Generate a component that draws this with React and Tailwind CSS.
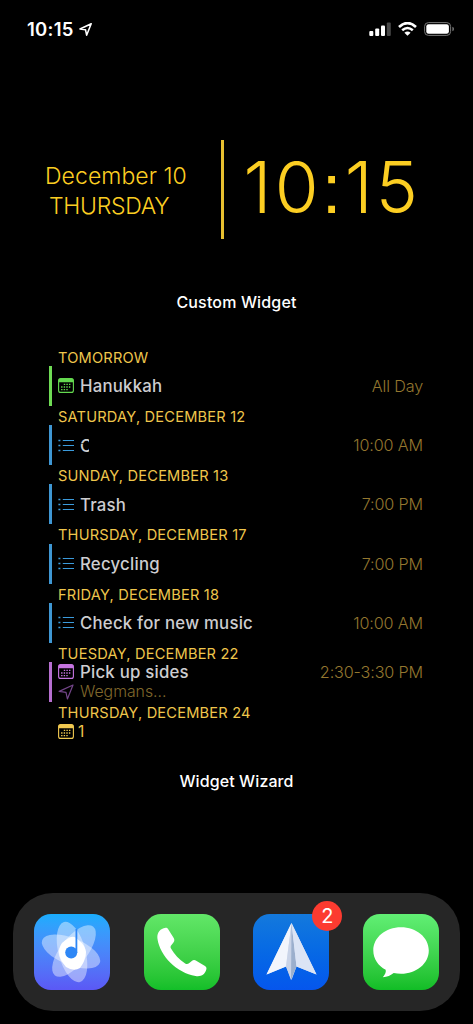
const days = [
  { heading: "TOMORROW", title: "Hanukkah", time: "All Day", kind: "event", color: "text-[#64d94f]", bar: "bg-[#6fdb55]" },
  { heading: "SATURDAY, DECEMBER 12", title: "C", time: "10:00 AM", kind: "task", redacted: true },
  { heading: "SUNDAY, DECEMBER 13", title: "Trash", time: "7:00 PM", kind: "task" },
  { heading: "THURSDAY, DECEMBER 17", title: "Recycling", time: "7:00 PM", kind: "task" },
  { heading: "FRIDAY, DECEMBER 18", title: "Check for new music", time: "10:00 AM", kind: "task" },
  {
    heading: "TUESDAY, DECEMBER 22",
    title: "Pick up sides",
    time: "2:30-3:30 PM",
    kind: "event",
    location: "Wegmans...",
    color: "text-[#c574e0]",
    bar: "bg-[#b66fd0]",
  },
];

const CalendarIcon = ({ className }) => (
  <svg viewBox="0 0 16 15" className={`w-4 h-[15px] shrink-0 ${className}`} fill="none">
    <rect x="0.6" y="0.6" width="14.8" height="13.8" rx="2" stroke="currentColor" strokeWidth="1.1" />
    <path d="M0.6 4.2V2.4Q0.6 0.6 2.4 0.6H13.6Q15.4 0.6 15.4 2.4V4.2Z" fill="currentColor" />
    <path
      d="M5.8 6.4H13.2M3.1 9H13.2M3.1 11.6H10.6"
      stroke="currentColor"
      strokeWidth="1.3"
      strokeDasharray="1.4 1.2"
    />
  </svg>
);

const ListIcon = ({ className }) => (
  <svg viewBox="0 0 16 13" className={`w-4 h-[13px] shrink-0 ${className}`} fill="none" stroke="currentColor">
    <path d="M4.8 1.5H16M4.8 6.5H16M4.8 11.5H16" strokeWidth="1.1" />
    <path d="M0.4 1.5H2.4M0.4 6.5H2.4M0.4 11.5H2.4" strokeWidth="1.7" />
  </svg>
);

const LocationIcon = ({ className }) => (
  <svg viewBox="0 0 16 16" className={`shrink-0 ${className}`} fill="none" stroke="currentColor" strokeLinejoin="round">
    <path d="M15 1L1.2 7.4L8 8.3L9.4 15Z" />
  </svg>
);

const StatusBar = () => (
  <div className="h-[58px] pl-[27px] pr-[18px] flex items-center justify-between text-white">
    <div className="flex items-center gap-[5px]">
      <span className="text-[18.5px] font-semibold tracking-[0.25px] leading-none">10:15</span>
      <LocationIcon className="w-[13px] h-[13px] stroke-[1.9]" />
    </div>
    <div className="flex items-center gap-[7px]">
      <svg viewBox="0 0 22 14" className="w-[22px] h-[14px]" fill="currentColor">
        <rect x="0.3" y="9" width="4" height="5" rx="1" />
        <rect x="6.2" y="6.6" width="4" height="7.4" rx="1" />
        <rect x="12" y="3.6" width="4" height="10.4" rx="1" />
        <rect x="17.8" y="0.4" width="4" height="13.6" rx="1" opacity="0.28" />
      </svg>
      <svg viewBox="0 0 19 14" className="w-[19px] h-[14px]" fill="none" stroke="currentColor">
        <path d="M1 4.9Q9.5 -2.7 18 4.9" strokeWidth="2.7" />
        <path d="M4.2 8.3Q9.5 3.6 14.8 8.3" strokeWidth="2.5" />
        <path d="M9.5 13.8L6.4 10.8Q9.5 8.4 12.6 10.8Z" fill="currentColor" stroke="none" />
      </svg>
      <svg viewBox="0 0 31 14" className="w-[31px] h-[14px]" fill="none">
        <rect x="0.6" y="0.6" width="26" height="12.8" rx="3.8" stroke="#777" strokeWidth="1" />
        <rect x="2.3" y="2.2" width="22.6" height="9.6" rx="2.3" fill="white" />
        <path d="M28.4 4.8Q30 5.3 30 7T28.4 9.2Z" fill="#777" />
      </svg>
    </div>
  </div>
);

const ClockWidget = () => (
  <div className="mt-[82px] h-[99px] pl-[45px] flex items-center text-[#fcce22] font-light">
    <div className="w-[176px] text-[23px] leading-[30px] pt-0.5">
      <div className="tracking-[0.05px] whitespace-nowrap">December 10</div>
      <div className="pl-1 tracking-[-0.3px]">THURSDAY</div>
    </div>
    <div className="w-[2.5px] h-[99px] bg-[#e8c030]" />
    <div className="ml-5 pb-1 text-[71px] leading-none tracking-[3.2px] whitespace-nowrap">
      10<span className="font-['Liberation_Sans',sans-serif]">:</span>15
    </div>
  </div>
);

const DayHeading = ({ children }) => (
  <h3 className="h-[19.2px] pl-[9px] text-[14.6px] leading-[22px] tracking-[0.2px] text-[#efc64c] whitespace-nowrap">
    {children}
  </h3>
);

const DayRow = ({ day }) => {
  const color = day.color || "text-[#3b9bdc]";
  return (
    <div>
      <DayHeading>{day.heading}</DayHeading>
      <div className="h-10 flex">
        <div className={`w-[2.5px] h-10 ${day.bar || "bg-[#3f97d3]"}`} />
        <div className="flex-1 pl-[6.5px] flex flex-col justify-center">
          <div className="flex items-center h-5">
            {day.kind === "event" ? <CalendarIcon className={color} /> : <ListIcon className={color} />}
            <span className="relative ml-1.5 pt-px text-[16.8px] leading-[22px] font-medium tracking-[0.22px] text-[#cdcdd0] whitespace-nowrap">
              {day.title}
              {/* private entry: the rest of the title is blacked out */}
              {day.redacted && <span className="absolute left-[9px] top-0 w-20 h-5 bg-black" />}
              {day.redacted && <span className="absolute left-0 top-[9px] w-[5px] h-[1.5px] bg-black/60" />}
            </span>
            <span className="ml-auto pt-px text-[16.2px] leading-[21px] font-light tracking-[-0.15px] text-[#94772f] whitespace-nowrap">
              {day.time}
            </span>
          </div>
          {day.location && (
            <div className="flex items-center h-5">
              <LocationIcon className="w-4 h-4 stroke-[1.2] text-[#74468a]" />
              <span className="ml-1.5 pt-px text-[15.8px] leading-[22px] font-light text-[#80682c]">{day.location}</span>
            </div>
          )}
        </div>
      </div>
    </div>
  );
};

const AppTile = ({ className, badge, children }) => (
  <div className={`relative w-[76px] h-[76px] rounded-[17px] bg-linear-to-b ${className}`}>
    <svg viewBox="0 0 76 76" className="w-full h-full">
      {children}
    </svg>
    {badge && (
      <span className="absolute -top-[13px] -right-[13px] w-[30px] h-[30px] rounded-full bg-[#fc3b30] text-white text-[20px] flex items-center justify-center">
        {badge}
      </span>
    )}
  </div>
);

const Dock = () => (
  <div className="mx-[13px] mb-[13px] h-[118px] px-[21px] rounded-[40px] bg-[#262626] flex items-center justify-between">
    <AppTile className="from-[#18adfd] to-[#5b58f5]">
      <g fill="white" fillOpacity="0.42">
        <ellipse cx="37" cy="37.5" rx="31" ry="13.5" transform="rotate(22 37 37.5)" />
        <ellipse cx="38" cy="38" rx="31" ry="13.5" transform="rotate(75 38 38)" />
        <ellipse cx="40" cy="37" rx="31" ry="13.5" transform="rotate(-52 40 37)" />
      </g>
      <path d="M37 23Q41 21.5 45 26.5Q51 31 52 38Q51.5 47 46 54Q40 58 32 53Q25.5 46 24.8 38Q25.5 30 31 26.5Q34 24 37 23Z" fill="white" />
      <circle cx="37.2" cy="38.5" r="6" fill="#2e87f6" />
      <path d="M42.4 15V39" stroke="#2e87f6" strokeWidth="1.8" />
    </AppTile>
    <AppTile className="from-[#62e768] to-[#12bf28]">
      <path
        d="M19.6 14.2C15 15.8 12.8 19.5 13.5 25C16 42 33 59 51.5 62C57 63 61 60.5 62.3 55.6C62.8 53.8 62.3 53 61 52.1L52.2 46.7C50.7 45.8 49 45.9 47.8 47L45 49.3C43.8 50.3 42.5 50.4 41.2 49.5C35 45.5 30.5 40.5 27 34.5C26.2 33.2 26.5 32 27.5 31L29.6 28.3C30.6 27 30.5 25.5 29.7 24.1L24.2 15.2C23 13.3 21.5 13.4 19.6 14.2Z"
        fill="white"
      />
    </AppTile>
    <AppTile className="from-[#1479dc] to-[#0656ed]" badge="2">
      <path d="M38.5 9L13.5 60.5L33 52.5L38.5 66L43.5 52.5L63.5 60.5Z" fill="#d5dff1" />
      <path d="M38.5 9L13.5 60.5L33 52.5Z" fill="#f2f5fc" />
      <path d="M38.5 9L33 52.5L38 66Z" fill="#c9d3e7" />
      <path d="M38.5 9L43.5 52.5L38 66Z" fill="#9bafcd" />
      <path d="M38.5 9L43.5 52.5L63.5 60.5Z" fill="#dbe4f5" />
    </AppTile>
    <AppTile className="from-[#61ef74] to-[#10bd25]">
      <path
        d="M38 13.2C22.5 13.2 10.3 23.4 10.3 36.4C10.3 44.7 15.2 51.8 22.7 55.8C23.2 58.5 22 60.8 19.8 63.2C24 63 28 61.2 30.7 58.9C33 59.4 35.5 59.7 38 59.7C53.4 59.7 65.8 49.4 65.8 36.4S53.4 13.2 38 13.2Z"
        fill="white"
      />
    </AppTile>
  </div>
);

const App = () => {
  return (
    <div className="w-[473px] h-[1024px] bg-black flex flex-col overflow-hidden font-['Inter',sans-serif]">
      <StatusBar />
      <ClockWidget />
      <div className="mt-[53px] text-center text-white text-[16px] leading-[21px] h-5 font-medium tracking-[0.15px]">
        Custom Widget
      </div>
      <div className="mt-[34.8px] ml-[49px] w-[374px]">
        {days.map((day) => (
          <DayRow key={day.heading} day={day} />
        ))}
        <DayHeading>THURSDAY, DECEMBER 24</DayHeading>
        <div className="h-5 pl-[9px] pt-px flex items-center gap-1 text-[#efc64c]">
          <CalendarIcon className="text-[#f0c850]" />
          <span className="pt-px text-[15.5px] leading-[22px]">1</span>
        </div>
      </div>
      <div className="mt-[30px] text-center text-white text-[16px] leading-[21px] h-5 font-medium tracking-[0.1px]">
        Widget Wizard
      </div>
      <div className="flex-1" />
      <Dock />
    </div>
  );
};

export default App;
